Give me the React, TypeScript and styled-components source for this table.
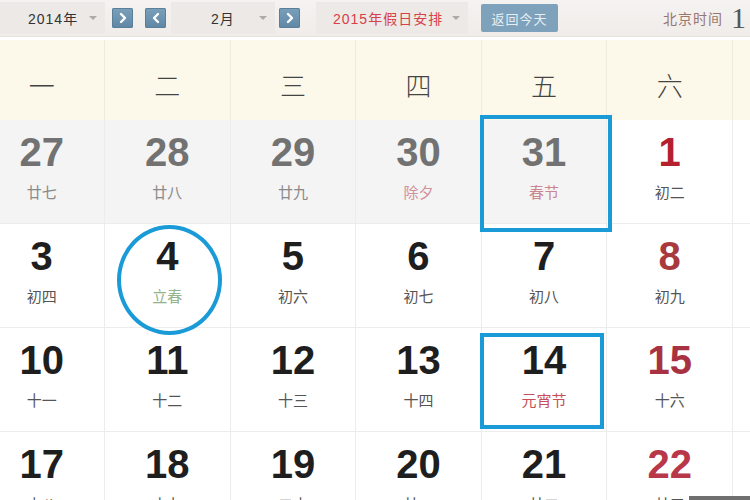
import React from "react";
import styled, { createGlobalStyle } from "styled-components";

const GlobalStyle = createGlobalStyle`
  html, body { margin: 0; padding: 0; background: #fff; overflow: hidden; }
  body { font-family: "Liberation Sans", "Noto Sans CJK SC", sans-serif; }
`;

const Page = styled.div`
  position: relative;
  width: 750px;
  height: 500px;
  overflow: hidden;
  background: #fff;
`;

const Toolbar = styled.div`
  display: flex;
  align-items: center;
  height: 36px;
  background: linear-gradient(#f5f3f1, #efece9);
  border-bottom: 1px solid #e6e2dc;
  margin-bottom: 3px;
  font-family: "Liberation Sans", "Noto Sans CJK SC", sans-serif;
  font-size: 14px;
  letter-spacing: 1px;
`;

const Select = styled.div<{ $w: number; $pl: number; $ml: number; $red?: boolean }>`
  display: flex;
  align-items: center;
  justify-content: space-between;
  box-sizing: border-box;
  width: ${(p) => p.$w}px;
  height: 32px;
  margin-left: ${(p) => p.$ml}px;
  padding: 0 8px 0 ${(p) => p.$pl}px;
  background: #ece9e6;
  color: ${(p) => (p.$red ? "#d8404a" : "#333")};
`;

const Caret = styled.span`
  width: 0;
  height: 0;
  border-left: 4px solid transparent;
  border-right: 4px solid transparent;
  border-top: 4px solid #b0aaa6;
`;

const NavButton = styled.div<{ $ml: number }>`
  display: flex;
  align-items: center;
  justify-content: center;
  width: 21px;
  height: 20px;
  margin-left: ${(p) => p.$ml}px;
  background: linear-gradient(#7aa0bb, #5f87a4);
  border-radius: 2px;
  box-shadow: inset 0 0 0 1px #5a8099;
`;

const TodayButton = styled.div`
  display: flex;
  align-items: center;
  justify-content: center;
  width: 77px;
  height: 28px;
  margin-left: 13px;
  background: #7ea2bb;
  color: #e6eef4;
  font-size: 13px;
  border-radius: 2px;
`;

const Clock = styled.div`
  margin-left: auto;
  margin-right: 4px;
  display: flex;
  align-items: center;
  color: #9a766c;
  font-size: 14px;
  letter-spacing: 1px;
  white-space: nowrap;
`;

const ClockDigit = styled.span`
  font-family: "Liberation Serif", serif;
  font-size: 30px;
  line-height: 30px;
  color: #555;
  margin-left: 8px;
  letter-spacing: 0;
`;

const Grid = styled.div`
  display: grid;
  grid-template-columns: repeat(7, 125.6px);
  margin-left: -20.6px;
`;

const HeadCell = styled.div`
  height: 80px;
  display: flex;
  align-items: center;
  justify-content: center;
  padding-top: 8px;
  background: #fcf9ea;
  border-right: 1px solid #f1ecd9;
  box-sizing: border-box;
  font-family: "Noto Sans CJK SC", sans-serif;
  font-size: 26px;
  font-weight: 300;
  color: #444;
`;

const DayCell = styled.div<{ $prev?: boolean }>`
  position: relative;
  height: 104px;
  box-sizing: border-box;
  display: flex;
  flex-direction: column;
  align-items: center;
  padding-top: 10px;
  background: ${(p) => (p.$prev ? "#f4f4f4" : "#fff")};
  border-right: 1px solid #ececec;
  border-bottom: 1px solid #ececec;
`;

const Num = styled.div<{ $color: string }>`
  font-family: "Liberation Sans", sans-serif;
  font-weight: bold;
  font-size: 40px;
  line-height: 44px;
  color: ${(p) => p.$color};
`;

const Lunar = styled.div<{ $color: string }>`
  margin-top: 8px;
  font-family: "Noto Sans CJK SC", sans-serif;
  font-size: 15px;
  line-height: 20px;
  color: ${(p) => p.$color};
`;

const BoxMark = styled.div<{ $t: number; $r: number; $b: number; $l: number }>`
  position: absolute;
  z-index: 2;
  top: ${(p) => p.$t}px;
  right: ${(p) => p.$r}px;
  bottom: ${(p) => p.$b}px;
  left: ${(p) => p.$l}px;
  border: 4px solid #1a9ad6;
  pointer-events: none;
`;

const CircleMark = styled.div`
  position: absolute;
  z-index: 2;
  top: 1px;
  left: 12px;
  width: 105px;
  height: 110px;
  box-sizing: border-box;
  border: 4px solid #1a9ad6;
  border-radius: 50%;
  pointer-events: none;
`;

const CornerBar = styled.div`
  position: absolute;
  right: 0;
  bottom: 0;
  width: 61px;
  height: 4px;
  background: #6f6f6f;
`;

const Chevron = ({ left }: { left?: boolean }) => (
  <svg width="10" height="12" viewBox="0 0 10 12">
    <polyline
      points={left ? "7,2 3,6 7,10" : "3,2 7,6 3,10"}
      fill="none"
      stroke="#fff"
      strokeWidth="2.4"
      strokeLinecap="round"
      strokeLinejoin="round"
    />
  </svg>
);

type Day = {
  n: number;
  lunar: string;
  prev?: boolean;
  red?: string;
  lunarColor?: string;
  mark?: "box1" | "box2" | "circle";
};

const weeks: Day[][] = [
  [
    { n: 27, lunar: "廿七", prev: true },
    { n: 28, lunar: "廿八", prev: true },
    { n: 29, lunar: "廿九", prev: true },
    { n: 30, lunar: "除夕", prev: true, lunarColor: "#d2909a" },
    { n: 31, lunar: "春节", prev: true, lunarColor: "#c98690", mark: "box1" },
    { n: 1, lunar: "初二", red: "#b3202e" },
    { n: 2, lunar: "初三", red: "#b3202e" },
  ],
  [
    { n: 3, lunar: "初四" },
    { n: 4, lunar: "立春", lunarColor: "#93b38a", mark: "circle" },
    { n: 5, lunar: "初六" },
    { n: 6, lunar: "初七" },
    { n: 7, lunar: "初八" },
    { n: 8, lunar: "初九", red: "#a83a3e" },
    { n: 9, lunar: "初十", red: "#a83a3e" },
  ],
  [
    { n: 10, lunar: "十一" },
    { n: 11, lunar: "十二" },
    { n: 12, lunar: "十三" },
    { n: 13, lunar: "十四" },
    { n: 14, lunar: "元宵节", lunarColor: "#c84f5a", mark: "box2" },
    { n: 15, lunar: "十六", red: "#a93242" },
    { n: 16, lunar: "十七", red: "#a93242" },
  ],
  [
    { n: 17, lunar: "十八" },
    { n: 18, lunar: "十九" },
    { n: 19, lunar: "二十" },
    { n: 20, lunar: "廿一" },
    { n: 21, lunar: "廿二" },
    { n: 22, lunar: "廿三", red: "#b8384a" },
    { n: 23, lunar: "廿四", red: "#b8384a" },
  ],
];

const heads = ["一", "二", "三", "四", "五", "六", "日"];

export default function App() {
  return (
    <Page>
      <GlobalStyle />
      <Toolbar>
        <Select $w={105} $pl={28} $ml={0}>
          <span>2014年</span>
          <Caret />
        </Select>
        <NavButton $ml={7}>
          <Chevron />
        </NavButton>
        <NavButton $ml={12}>
          <Chevron left />
        </NavButton>
        <Select $w={104} $pl={40} $ml={5}>
          <span>2月</span>
          <Caret />
        </Select>
        <NavButton $ml={4}>
          <Chevron />
        </NavButton>
        <Select $w={152} $pl={17} $ml={16} $red>
          <span>2015年假日安排</span>
          <Caret />
        </Select>
        <TodayButton>返回今天</TodayButton>
        <Clock>
          北京时间<ClockDigit>1</ClockDigit>
        </Clock>
      </Toolbar>
      <Grid>
        {heads.map((h) => (
          <HeadCell key={h}>{h}</HeadCell>
        ))}
        {weeks.flat().map((d) => (
          <DayCell key={`${d.prev ? "p" : "c"}${d.n}`} $prev={d.prev}>
            <Num $color={d.red ?? (d.prev ? "#727272" : "#1e1e1e")}>{d.n}</Num>
            <Lunar $color={d.lunarColor ?? (d.prev ? "#8a8a8a" : "#555")}>{d.lunar}</Lunar>
            {d.mark === "box1" && <BoxMark $t={-5} $r={-6} $b={-9} $l={-2} />}
            {d.mark === "box2" && <BoxMark $t={5} $r={2} $b={2} $l={-2} />}
            {d.mark === "circle" && <CircleMark />}
          </DayCell>
        ))}
      </Grid>
      <CornerBar />
    </Page>
  );
}
